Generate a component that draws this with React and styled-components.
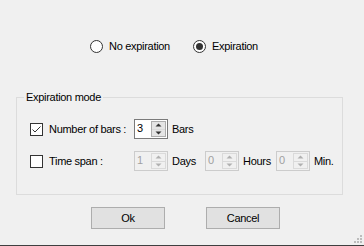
import React, { useState } from "react";
import styled, { createGlobalStyle } from "styled-components";

const GlobalStyle = createGlobalStyle`
  html, body {
    margin: 0;
    padding: 0;
    background: #f0f0f0;
  }
  * {
    box-sizing: border-box;
  }
`;

const Window = styled.div`
  position: relative;
  width: 364px;
  height: 246px;
  background: #f0f0f0;
  border-bottom: 1px solid #3f3f3f;
  font-family: "Liberation Sans", Arial, sans-serif;
  font-size: 11px;
  letter-spacing: -0.3px;
  color: #000;
  display: flex;
  flex-direction: column;
  padding-top: 40px;
`;

const RadioRow = styled.div`
  display: flex;
  align-items: center;
  height: 13px;
  padding-left: 90px;
`;

const RadioOption = styled.label`
  display: flex;
  align-items: center;
  gap: 6px;
  width: ${p => p.$width || "auto"};
  line-height: 13px;
  cursor: default;
`;

const RadioCircle = styled.span`
  width: 13px;
  height: 13px;
  border-radius: 50%;
  border: 1px solid #333;
  background: #fff;
  display: flex;
  align-items: center;
  justify-content: center;
  flex-shrink: 0;

  &::after {
    content: "";
    width: 7px;
    height: 7px;
    border-radius: 50%;
    background: ${p => (p.$checked ? "#333" : "transparent")};
  }
`;

const GroupBox = styled.fieldset`
  margin: 38px 21px 0 16px;
  padding: 15px 0 23px 0;
  border: 1px solid #dcdcdc;
  min-inline-size: 0;
  display: flex;
  flex-direction: column;
  gap: 12px;
`;

const Legend = styled.legend`
  margin-left: 7px;
  padding: 0 2px;
  line-height: 13px;
`;

const Row = styled.div`
  display: flex;
  align-items: center;
  height: 20px;
  padding-left: 13px;
`;

const CheckBox = styled.span`
  width: 13px;
  height: 13px;
  border: 1px solid #333;
  background: #fff;
  flex-shrink: 0;
  display: flex;
  align-items: center;
  justify-content: center;
  margin-right: 6px;
`;

const FieldLabel = styled.span`
  width: 85px;
  flex-shrink: 0;
  white-space: nowrap;
`;

const Spin = styled.div`
  width: 34px;
  height: 20px;
  border: 1px solid ${p => (p.$disabled ? "#cccccc" : "#7a7a7a")};
  background: ${p => (p.$disabled ? "#f0f0f0" : "#fff")};
  display: flex;
  align-items: stretch;
  flex-shrink: 0;
`;

const SpinValue = styled.span`
  flex: 1;
  padding-left: 2px;
  line-height: 17px;
  color: ${p => (p.$disabled ? "#a0a0a0" : "#000")};
`;

const SpinButtons = styled.div`
  width: 15px;
  margin: 1px 1px 1px 0;
  display: flex;
  flex-direction: column;
  border: 1px solid ${p => (p.$disabled ? "#dadada" : "#adadad")};
  background: ${p => (p.$disabled ? "#f0f0f0" : "#e5e5e5")};
`;

const SpinHalf = styled.div`
  flex: 1;
  display: flex;
  align-items: center;
  justify-content: center;
  & + & {
    border-top: 1px solid ${p => (p.$disabled ? "#dadada" : "#adadad")};
  }
`;

const Unit = styled.span`
  width: 37px;
  flex-shrink: 0;
  padding-left: 4px;
  white-space: nowrap;
`;

const ButtonRow = styled.div`
  display: flex;
  padding-left: 91px;
  gap: 41px;
  margin-top: 12px;
`;

const Button = styled.button`
  width: 74px;
  height: 22px;
  background: #e1e1e1;
  border: 1px solid #adadad;
  font-family: inherit;
  font-size: 11px;
  letter-spacing: -0.3px;
  color: #000;
  padding: 0;
`;

const Grip = styled.svg`
  position: absolute;
  right: 2px;
  bottom: 2px;
`;

function Arrow({ up, color }) {
  return (
    <svg width="7" height="4" viewBox="0 0 7 4">
      {up ? (
        <polygon points="0.5,3.5 3.5,0.5 6.5,3.5" fill={color} />
      ) : (
        <polygon points="0.5,0.5 6.5,0.5 3.5,3.5" fill={color} />
      )}
    </svg>
  );
}

function SpinBox({ value, disabled }) {
  const arrowColor = disabled ? "#b0b0b0" : "#333";
  return (
    <Spin $disabled={disabled}>
      <SpinValue $disabled={disabled}>{value}</SpinValue>
      <SpinButtons $disabled={disabled}>
        <SpinHalf $disabled={disabled}>
          <Arrow up color={arrowColor} />
        </SpinHalf>
        <SpinHalf $disabled={disabled}>
          <Arrow color={arrowColor} />
        </SpinHalf>
      </SpinButtons>
    </Spin>
  );
}

export default function App() {
  const [expiration, setExpiration] = useState(true);

  return (
    <>
      <GlobalStyle />
      <Window>
        <RadioRow>
          <RadioOption $width="103px" onClick={() => setExpiration(false)}>
            <RadioCircle $checked={!expiration} />
            No expiration
          </RadioOption>
          <RadioOption onClick={() => setExpiration(true)}>
            <RadioCircle $checked={expiration} />
            Expiration
          </RadioOption>
        </RadioRow>

        <GroupBox>
          <Legend>Expiration mode</Legend>
          <Row>
            <CheckBox>
              <svg width="11" height="11" viewBox="0 0 11 11">
                <polyline points="1.5,5.5 4,8 9.5,2.5" fill="none" stroke="#333" strokeWidth="1" />
              </svg>
            </CheckBox>
            <FieldLabel>Number of bars :</FieldLabel>
            <SpinBox value="3" />
            <Unit>Bars</Unit>
          </Row>
          <Row>
            <CheckBox />
            <FieldLabel>Time span :</FieldLabel>
            <SpinBox value="1" disabled />
            <Unit>Days</Unit>
            <SpinBox value="0" disabled />
            <Unit>Hours</Unit>
            <SpinBox value="0" disabled />
            <Unit>Min.</Unit>
          </Row>
        </GroupBox>

        <ButtonRow>
          <Button>Ok</Button>
          <Button>Cancel</Button>
        </ButtonRow>

        <Grip width="8" height="8" viewBox="0 0 8 8">
          <rect x="6" y="0" width="2" height="2" fill="#bcbcbc" />
          <rect x="3" y="3" width="2" height="2" fill="#bcbcbc" />
          <rect x="6" y="3" width="2" height="2" fill="#bcbcbc" />
          <rect x="0" y="6" width="2" height="2" fill="#bcbcbc" />
          <rect x="3" y="6" width="2" height="2" fill="#bcbcbc" />
          <rect x="6" y="6" width="2" height="2" fill="#bcbcbc" />
        </Grip>
      </Window>
    </>
  );
}
